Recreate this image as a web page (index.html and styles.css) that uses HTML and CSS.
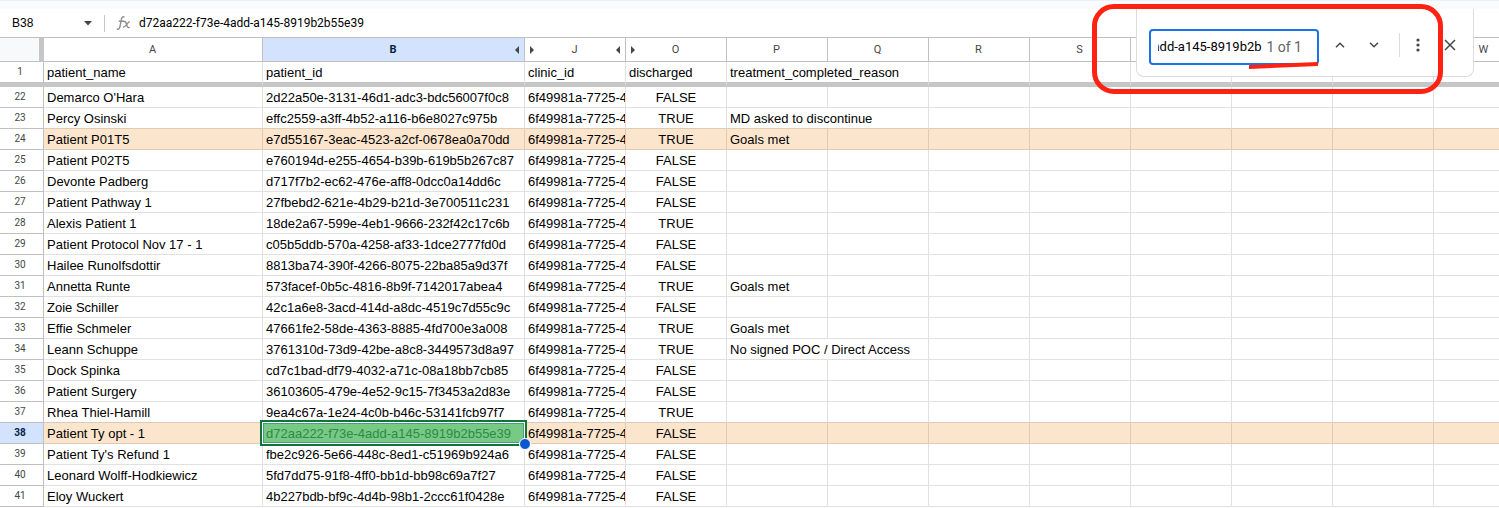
FILE: index.html
```html
<!DOCTYPE html>
<html lang="en">
<head>
<meta charset="utf-8">
<title>Patients sheet</title>
<link rel="stylesheet" href="styles.css">
</head>
<body>
<div class="toolbar-edge"></div>
<div class="formula-bar">
  <button class="name-box" type="button"><span>B38</span>
    <svg width="8" height="5" viewBox="0 0 8 5" aria-hidden="true"><path d="M0 0h8L4 4.500z" fill="#444746"/></svg>
  </button>
  <label class="fx" for="formula"><svg width="15" height="16" viewBox="0 0 15 16" fill="none" stroke="#8d8f92" stroke-width="1.400" aria-hidden="true"><path d="M8.500 2.300C6.800 1 5.800 2 5.400 4.500L4 11.500C3.500 14 2.400 14.800.8 13.800M2.800 6.300h5.400M7.500 7c1-.9 1.900-.6 2.300.6l1.500 4c.5 1.200 1.300 1.300 2.300.5M13.800 6.800c-2.400.1-4 5.500-6.800 5.400"/></svg></label>
  <input class="formula" id="formula" aria-label="Formula" value="d72aa222-f73e-4add-a145-8919b2b55e39">
</div>

<main class="sheet">
<table class="grid">
  <colgroup id="cols"></colgroup>
  <thead id="head"></thead>
  <tbody id="body"></tbody>
</table>
</main>

<form class="find-bar" role="search">
  <div class="find-field">
    <input class="find-input" id="find" aria-label="Find in sheet" value="d72aa222-f73e-4add-a145-8919b2b">
    <output class="find-count" for="find">1 of 1</output>
  </div>
  <button class="icon-button" type="button" aria-label="Previous"><svg width="10" height="6" viewBox="0 0 10 6"><path d="M1 5.200 5 1.200l4 4"/></svg></button>
  <button class="icon-button" type="button" aria-label="Next"><svg width="10" height="6" viewBox="0 0 10 6"><path d="M1 .8l4 4 4-4"/></svg></button>
  <span class="find-divider"></span>
  <button class="icon-button narrow more" type="button" aria-label="More options"><svg width="4" height="14" viewBox="0 0 4 14"><circle cx="2" cy="2" r="1.600"/><circle cx="2" cy="7" r="1.600"/><circle cx="2" cy="12" r="1.600"/></svg></button>
  <button class="icon-button narrow" type="button" aria-label="Close"><svg width="12" height="12" viewBox="0 0 12 12"><path d="M1 1l10 10M11 1 1 11"/></svg></button>
</form>

<div class="annotation-box"></div>
<svg class="annotation-line" width="70" height="8" viewBox="0 0 70 8" aria-hidden="true"><path d="M0 3 69 0v4L0 7z" fill="#ff2213"/></svg>
<script src="sheet.js"></script>
</body>
</html>
```
FILE: styles.css
```css
* { box-sizing: border-box; }
body {
  margin: 0;
  height: 100vh;
  overflow: hidden;
  position: relative;
  background: #fff;
  color: #000;
  font-family: "Liberation Sans", Arial, sans-serif;
}
button, input { font: inherit; border: 0; padding: 0; background: none; color: inherit; outline: 0; }
.toolbar-edge { height: 9px; background: #f9fbfd; border-top: 1px solid #edf2fa; }
.formula-bar {
  display: flex;
  align-items: center;
  height: 29px;
  border-bottom: 1px solid #c0c0c0;
}
.name-box {
  display: flex;
  justify-content: space-between;
  align-items: center;
  width: 105px;
  height: 17px;
  padding: 0 12px;
  border-right: 1px solid #c7c7c7;
  font-size: 12px;
}
.fx { display: flex; padding: 0 8px 0 11px; }
.formula { flex: 1; font-family: Roboto, sans-serif; font-size: 12px; }

.sheet { overflow: hidden; }
.grid {
  table-layout: fixed;
  width: 1535px;
  border-collapse: separate;
  border-spacing: 0;
  font-size: 13px;
}
.col-rows { width: 44px; }
.col-name { width: 219px; }
.col-id { width: 262px; }
.col { width: 101px; }
th, td { padding: 0; height: 21px; border-right: 1px solid #e1e1e1; border-bottom: 1px solid #e1e1e1; white-space: nowrap; }
td { padding: 2px 0 0 3px; line-height: 18px; overflow: hidden; }
.letters th {
  height: 24px;
  border-color: #c0c0c0;
  color: #444746;
  font: 400 11px Roboto, sans-serif;
}
.letters .corner { background: #f8f9fa; border-right: 5px solid #c6c6c6; }
.letters .current, .row-number.current { background: #d3e3fd; color: #041e49; font-weight: 700; }
.letter { display: grid; grid-template-columns: 5px 1fr 5px; align-items: center; padding: 0 5px 0 4px; }
.letter svg { fill: #444746; }
.letter span { grid-column: 2; }
.row-number { border-color: #c0c0c0; color: #444746; font: 400 10px/20px Roboto, sans-serif; padding-right: 3px; }
.frozen th, .frozen td { height: 25px; border-bottom: 5px solid #c6c6c6; }
.marked td { background: #fce5cd; border-color: #dfcab5; }
.before-marked td { border-bottom-color: #dfcab5; }
td.center { text-align: center; padding-left: 0; }
.selected { position: relative; overflow: visible; }
.selection {
  position: absolute;
  inset: -3px;
  padding-left: 4px;
  border: 2px solid #137333;
  background: #77c983;
  color: #2d8a49;
  box-shadow: inset 0 0 0 1px #fff, inset 0 0 0 2px #3f9e91;
  line-height: 24px;
}
.selection::after {
  content: "";
  position: absolute;
  right: -6px;
  bottom: -6px;
  width: 10px;
  height: 10px;
  border: 1px solid #fff;
  border-radius: 50%;
  background: #0b57d0;
}

.find-bar {
  position: absolute;
  top: 9px;
  right: 25px;
  width: 338px;
  height: 68px;
  display: flex;
  align-items: center;
  padding: 4px 0 0 12px;
  background: #fff;
  border: 1px solid #dadce0;
  border-top: 0;
  border-radius: 0 0 8px 8px;
  font-family: Roboto, sans-serif;
}
.find-field {
  flex: none;
  display: flex;
  align-items: center;
  gap: 4px;
  width: 170px;
  height: 36px;
  padding: 0 15px 0 7px;
  margin: 4px 4px 0 0;
  border: 2px solid #1a73e8;
  border-radius: 4px;
}
.find-input { flex: 1; min-width: 0; font-size: 13px; text-align: right; }
.find-count { color: #5f6368; font-size: 14px; }
.icon-button { flex: none; display: grid; place-items: center; width: 34px; height: 34px; }
.icon-button.narrow { width: 32px; }
.icon-button svg { fill: none; stroke: #444746; stroke-width: 1.500; }
.icon-button.more svg { fill: #444746; stroke: none; }
.find-divider { width: 1px; height: 24px; margin: 0 2px 0 8px; background: #dadce0; }
.annotation-box {
  position: absolute;
  top: 4px;
  right: 56px;
  width: 351px;
  height: 90px;
  border: 5px solid #ff2213;
  border-radius: 22px;
  pointer-events: none;
}
.annotation-line { position: absolute; top: 62px; right: 180px; }
```
FILE: sheet.js
```js
const letters = ["A", "B", "J", "O", "P", "Q", "R", "S", "T", "U", "V", "W"];
const rows = [
  [22, "Demarco O'Hara", "2d22a50e-3131-46d1-adc3-bdc56007f0c8", false],
  [23, "Percy Osinski", "effc2559-a3ff-4b52-a116-b6e8027c975b", true, "MD asked to discontinue"],
  [24, "Patient P01T5", "e7d55167-3eac-4523-a2cf-0678ea0a70dd", true, "Goals met"],
  [25, "Patient P02T5", "e760194d-e255-4654-b39b-619b5b267c87", false],
  [26, "Devonte Padberg", "d717f7b2-ec62-476e-aff8-0dcc0a14dd6c", false],
  [27, "Patient Pathway 1", "27fbebd2-621e-4b29-b21d-3e700511c231", false],
  [28, "Alexis Patient 1", "18de2a67-599e-4eb1-9666-232f42c17c6b", true],
  [29, "Patient Protocol Nov 17 - 1", "c05b5ddb-570a-4258-af33-1dce2777fd0d", false],
  [30, "Hailee Runolfsdottir", "8813ba74-390f-4266-8075-22ba85a9d37f", false],
  [31, "Annetta Runte", "573facef-0b5c-4816-8b9f-7142017abea4", true, "Goals met"],
  [32, "Zoie Schiller", "42c1a6e8-3acd-414d-a8dc-4519c7d55c9c", false],
  [33, "Effie Schmeler", "47661fe2-58de-4363-8885-4fd700e3a008", true, "Goals met"],
  [34, "Leann Schuppe", "3761310d-73d9-42be-a8c8-3449573d8a97", true, "No signed POC / Direct Access"],
  [35, "Dock Spinka", "cd7c1bad-df79-4032-a71c-08a18bb7cb85", false],
  [36, "Patient Surgery", "36103605-479e-4e52-9c15-7f3453a2d83e", false],
  [37, "Rhea Thiel-Hamill", "9ea4c67a-1e24-4c0b-b46c-53141fcb97f7", true],
  [38, "Patient Ty opt - 1", "d72aa222-f73e-4add-a145-8919b2b55e39", false],
  [39, "Patient Ty's Refund 1", "fbe2c926-5e66-448c-8ed1-c51969b924a6", false],
  [40, "Leonard Wolff-Hodkiewicz", "5fd7dd75-91f8-4ff0-bb1d-bb98c69a7f27", false],
  [41, "Eloy Wuckert", "4b227bdb-bf9c-4d4b-98b1-2ccc61f0428e", false]
];
const marked = [24, 38];
const current = 38;

const left = '<svg width="5" height="8" viewBox="0 0 5 8" aria-hidden="true"><path d="M5 0v8L1 4z"/></svg>';
const right = '<svg width="5" height="8" viewBox="0 0 5 8" aria-hidden="true"><path d="M1 0v8l4-4z"/></svg>';

function reason(text = "") {
  return text.length > 12
    ? `<td colspan="2">${text}</td>` + "<td></td>".repeat(6)
    : `<td>${text}</td>` + "<td></td>".repeat(7);
}

document.getElementById("cols").innerHTML =
  '<col class="col-rows"><col class="col-name"><col class="col-id">' + '<col class="col">'.repeat(10);

document.getElementById("head").innerHTML =
  '<tr class="letters"><th class="corner"></th>' +
  letters.map(l => `<th scope="col" class="${l === "B" ? "current" : ""}"><div class="letter">` +
    `${"JO".includes(l) ? right : ""}<span>${l}</span>${"BJ".includes(l) ? left : ""}</div></th>`).join("") +
  '</tr><tr class="frozen"><th class="row-number" scope="row">1</th>' +
  "<td>patient_name</td><td>patient_id</td><td>clinic_id</td><td>discharged</td>" +
  reason("treatment_completed_reason") + "</tr>";

document.getElementById("body").innerHTML = rows.map(([n, name, id, done, why]) => {
  const kind = marked.includes(n) ? "marked" : marked.includes(n + 1) ? "before-marked" : "";
  const idCell = n === current
    ? `<td class="selected"><div class="selection">${id}</div></td>`
    : `<td>${id}</td>`;
  return `<tr class="${kind}"><th scope="row" class="row-number${n === current ? " current" : ""}">${n}</th>` +
    `<td>${name}</td>${idCell}<td>6f49981a-7725-4b1c</td>` +
    `<td class="center">${done ? "TRUE" : "FALSE"}</td>${reason(why)}</tr>`;
}).join("");

const find = document.getElementById("find");
find.scrollLeft = find.scrollWidth;
```
